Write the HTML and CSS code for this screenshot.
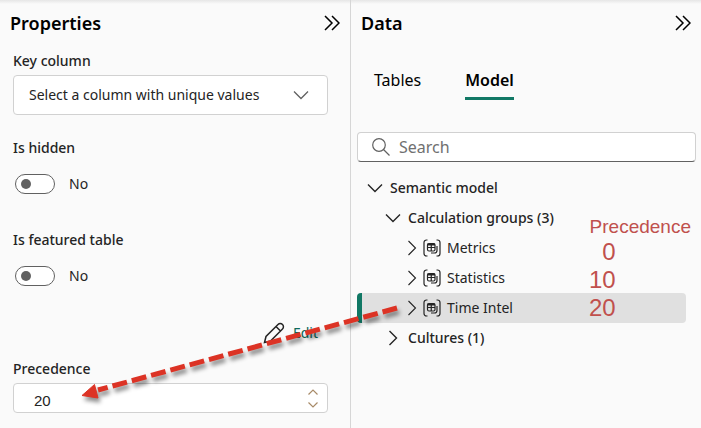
FILE: index.html
```html
<!DOCTYPE html>
<html lang="en">
<head>
<meta charset="utf-8">
<title>Model properties</title>
<link rel="stylesheet" href="styles.css">
</head>
<body>
<svg class="defs" aria-hidden="true">
  <symbol id="collapse" viewBox="0 0 16 16"><path d="M1 1l7 7-7 7M8 1l7 7-7 7"/></symbol>
  <symbol id="down" viewBox="0 0 16 16"><path d="M1 4.500l7 7 7-7"/></symbol>
  <symbol id="right" viewBox="0 0 16 16"><path d="M4.500 1l7 7-7 7"/></symbol>
  <symbol id="group" viewBox="0 0 18 18">
    <path d="M4.500 1H3.500A2.500 2.500 0 0 0 1 3.500v11A2.500 2.500 0 0 0 3.500 17H4.500M13.500 1h1A2.500 2.500 0 0 1 17 3.500v11a2.500 2.500 0 0 1-2.500 2.500H13.500"/>
    <rect x="4.500" y="4.500" width="7.500" height="7.500" rx="1.500"/>
    <path d="M4.500 5.500h7.500" stroke-width="2"/>
    <path d="M4.500 8.500h7.500M8.250 6v6M14 7v4.500a2.500 2.500 0 0 1-2.500 2.500H8"/>
  </symbol>
</svg>
<main class="workspace">
  <section class="panel properties">
    <header class="panel-head">
      <h1>Properties</h1>
      <button class="icon-button" aria-label="Collapse properties"><svg class="icon"><use href="#collapse"/></svg></button>
    </header>
    <form class="fields">
      <div class="field">
        <label for="key">Key column</label>
        <div class="select-box">
          <select id="key"><option>Select a column with unique values</option></select>
          <svg class="icon"><use href="#down"/></svg>
        </div>
      </div>
      <div class="field toggle-field">
        <label for="hidden">Is hidden</label>
        <div class="toggle-row"><input class="toggle" id="hidden" type="checkbox"><span>No</span></div>
      </div>
      <div class="field toggle-field">
        <label for="featured">Is featured table</label>
        <div class="toggle-row"><input class="toggle" id="featured" type="checkbox"><span>No</span></div>
      </div>
      <button class="edit" type="button">
        <svg viewBox="0 0 22 22"><path d="M1.500 20.500l1.500-6L15 2.500a3 3 0 0 1 4.500 4.500L7.500 19zM13 4.500l4.500 4.500"/></svg>
        Edit
      </button>
      <div class="field">
        <label for="precedence">Precedence</label>
        <div class="number-box">
          <input id="precedence" type="number" value="20">
          <div class="steps">
            <button type="button" aria-label="Increase"><svg viewBox="0 0 10 6"><path d="M.5 5.500L5 1l4.500 4.500"/></svg></button>
            <button type="button" aria-label="Decrease"><svg viewBox="0 0 10 6"><path d="M.5 .5L5 5 9.500 .5"/></svg></button>
          </div>
        </div>
      </div>
    </form>
  </section>
  <section class="panel data">
    <header class="panel-head">
      <h1>Data</h1>
      <button class="icon-button" aria-label="Collapse data"><svg class="icon"><use href="#collapse"/></svg></button>
    </header>
    <nav class="tabs">
      <button class="tab">Tables</button>
      <button class="tab active">Model</button>
    </nav>
    <div class="search">
      <svg viewBox="0 0 18 18"><circle cx="7" cy="7" r="6.300"/><path d="M11.500 11.500l6 6"/></svg>
      <input type="search" placeholder="Search" aria-label="Search">
    </div>
    <div class="tree-area">
      <ul class="tree">
        <li class="row"><svg class="icon"><use href="#down"/></svg>Semantic model</li>
        <li class="row level-2"><svg class="icon"><use href="#down"/></svg>Calculation groups (3)</li>
        <li class="row level-3"><svg class="icon"><use href="#right"/></svg><svg class="group"><use href="#group"/></svg>Metrics</li>
        <li class="row level-3"><svg class="icon"><use href="#right"/></svg><svg class="group"><use href="#group"/></svg>Statistics</li>
        <li class="row level-3 selected"><svg class="icon"><use href="#right"/></svg><svg class="group"><use href="#group"/></svg>Time Intel</li>
        <li class="row level-2"><svg class="icon"><use href="#right"/></svg>Cultures (1)</li>
      </ul>
      <div class="note">
        <span class="note-title">Precedence</span>
        <span>0</span>
        <span>10</span>
        <span>20</span>
      </div>
    </div>
  </section>
  <svg class="arrow" viewBox="0 0 340 110" aria-hidden="true">
    <path class="shaft" d="M327 11L28 93"/>
    <path class="head" d="M12 98.500L24.500 87.500 28 101z"/>
  </svg>
</main>
</body>
</html>
```
FILE: styles.css
```css
* { box-sizing: border-box; }

body {
  margin: 0;
  background: #fafafa;
  color: #242424;
  font: 14px/20px "Noto Sans", "Open Sans", sans-serif;
}

button, input, select { font: inherit; color: inherit; }
button { padding: 0; border: 0; background: none; }
h1 { margin: 0; font-size: 18px; line-height: 24px; font-weight: 600; color: #000; }
svg { flex: none; fill: none; stroke: #242424; }
.defs { position: absolute; width: 0; height: 0; }
.icon { display: block; width: 16px; height: 16px; }

.workspace {
  position: relative;
  display: grid;
  grid-template-columns: 350fr 351fr;
  min-height: 100vh;
  background: linear-gradient(#e6e6e6, #fafafa 4px);
}

.data { border-left: 1px solid #d6d6d6; }

.panel-head {
  display: flex;
  align-items: center;
  justify-content: space-between;
  height: 46px;
  padding: 0 10px;
}
.icon-button .icon { stroke: #000; stroke-width: 1.5; }

.fields { display: flex; flex-direction: column; padding: 5px 22px 15px 13px; }
.field { display: flex; flex-direction: column; gap: 4px; }
.field label { font-weight: 500; }
.toggle-field { gap: 16px; margin-top: 23px; }
.toggle-field + .toggle-field { margin-top: 36px; }

.select-box, .number-box, .search {
  display: flex;
  align-items: center;
  border: 1px solid #d1d1d1;
  border-radius: 4px;
  background: #fff;
}
.select-box { height: 40px; padding-right: 18px; }
.select-box select {
  flex: 1;
  min-width: 0;
  height: 100%;
  padding: 0 0 0 15px;
  border: 0;
  background: none;
  appearance: none;
}
.select-box .icon { stroke: #616161; stroke-width: 1.3; }

.toggle-row { display: flex; align-items: center; gap: 14px; padding-left: 2px; }
.toggle {
  display: grid;
  align-items: center;
  width: 40px;
  height: 20px;
  margin: 0;
  padding-left: 5px;
  border: 1px solid #616161;
  border-radius: 10px;
  background: #fff;
  appearance: none;
}
.toggle::before { content: ""; width: 10px; height: 10px; border-radius: 50%; background: #616161; }
.toggle:checked::before { margin-left: 18px; }

.edit {
  display: flex;
  align-items: center;
  align-self: flex-end;
  gap: 8px;
  margin: 37px 10px 16px 0;
  color: #0c695a;
}
.edit svg { width: 22px; height: 22px; margin: -1px 0; stroke-width: 1.5; }

.number-box { height: 30px; padding-right: 9px; }
.number-box input {
  flex: 1;
  min-width: 0;
  padding: 5px 0 0 20px;
  border: 0;
  background: none;
  font: 15px/20px "Liberation Sans", sans-serif;
  appearance: textfield;
}
.number-box input::-webkit-inner-spin-button { display: none; }
.steps { display: grid; gap: 7px; }
.steps svg { display: block; width: 10px; height: 6px; stroke: #a88b68; stroke-width: 1.2; }

.tabs { display: flex; gap: 44px; padding: 20px 23px 0; }
.tab {
  padding: 2px 0 5px;
  border-bottom: 3px solid transparent;
  color: #000;
  font-size: 16px;
  line-height: 24px;
}
.tab.active { border-color: #117865; font-weight: 600; }

.search {
  height: 30px;
  gap: 9px;
  margin: 32px 5px 11px 6px;
  padding: 0 14px;
  border-bottom-color: #616161;
}
.search svg { width: 18px; height: 18px; stroke: #616161; stroke-width: 1.2; }
.search input {
  flex: 1;
  min-width: 0;
  padding: 0;
  border: 0;
  background: none;
  font-size: 16px;
}
.search input::placeholder { color: #707070; }

.tree-area { position: relative; padding: 0 15px 20px 6px; }
.tree { margin: 0; padding: 0; list-style: none; }
.row {
  display: flex;
  align-items: center;
  gap: 7px;
  height: 30px;
  padding-left: 10px;
  font-weight: 500;
}
.row .icon { stroke-width: 1.4; }
.level-2 { padding-left: 28px; }
.level-3 { padding-left: 47px; gap: 3px; font-weight: 400; }
.row.level-3 .icon { stroke-width: 1.1; }
.group { width: 18px; height: 18px; margin-right: 3px; stroke-width: 1.2; }
.selected {
  border-radius: 4px;
  background: linear-gradient(90deg, #117865 5px, #e0e0e0 5px);
}

.note {
  position: absolute;
  top: 43px;
  right: 10px;
  display: grid;
  grid-template-columns: 26px auto;
  justify-items: end;
  color: #c0504d;
  font: 24px/28px "Liberation Sans", sans-serif;
}
.note span { grid-column: 1; }
.note .note-title { grid-column: 1 / -1; font-size: 19px; line-height: 22px; }

.arrow {
  position: absolute;
  top: 297px;
  left: 70px;
  width: 340px;
  height: 110px;
  overflow: visible;
  pointer-events: none;
  filter: drop-shadow(2px 4px 2px rgb(0 0 0 / 45%));
}
.shaft { stroke: #dc3325; stroke-width: 5; stroke-dasharray: 15 5; }
.head { fill: #dc3325; stroke: #dc3325; stroke-width: 1; }
```
